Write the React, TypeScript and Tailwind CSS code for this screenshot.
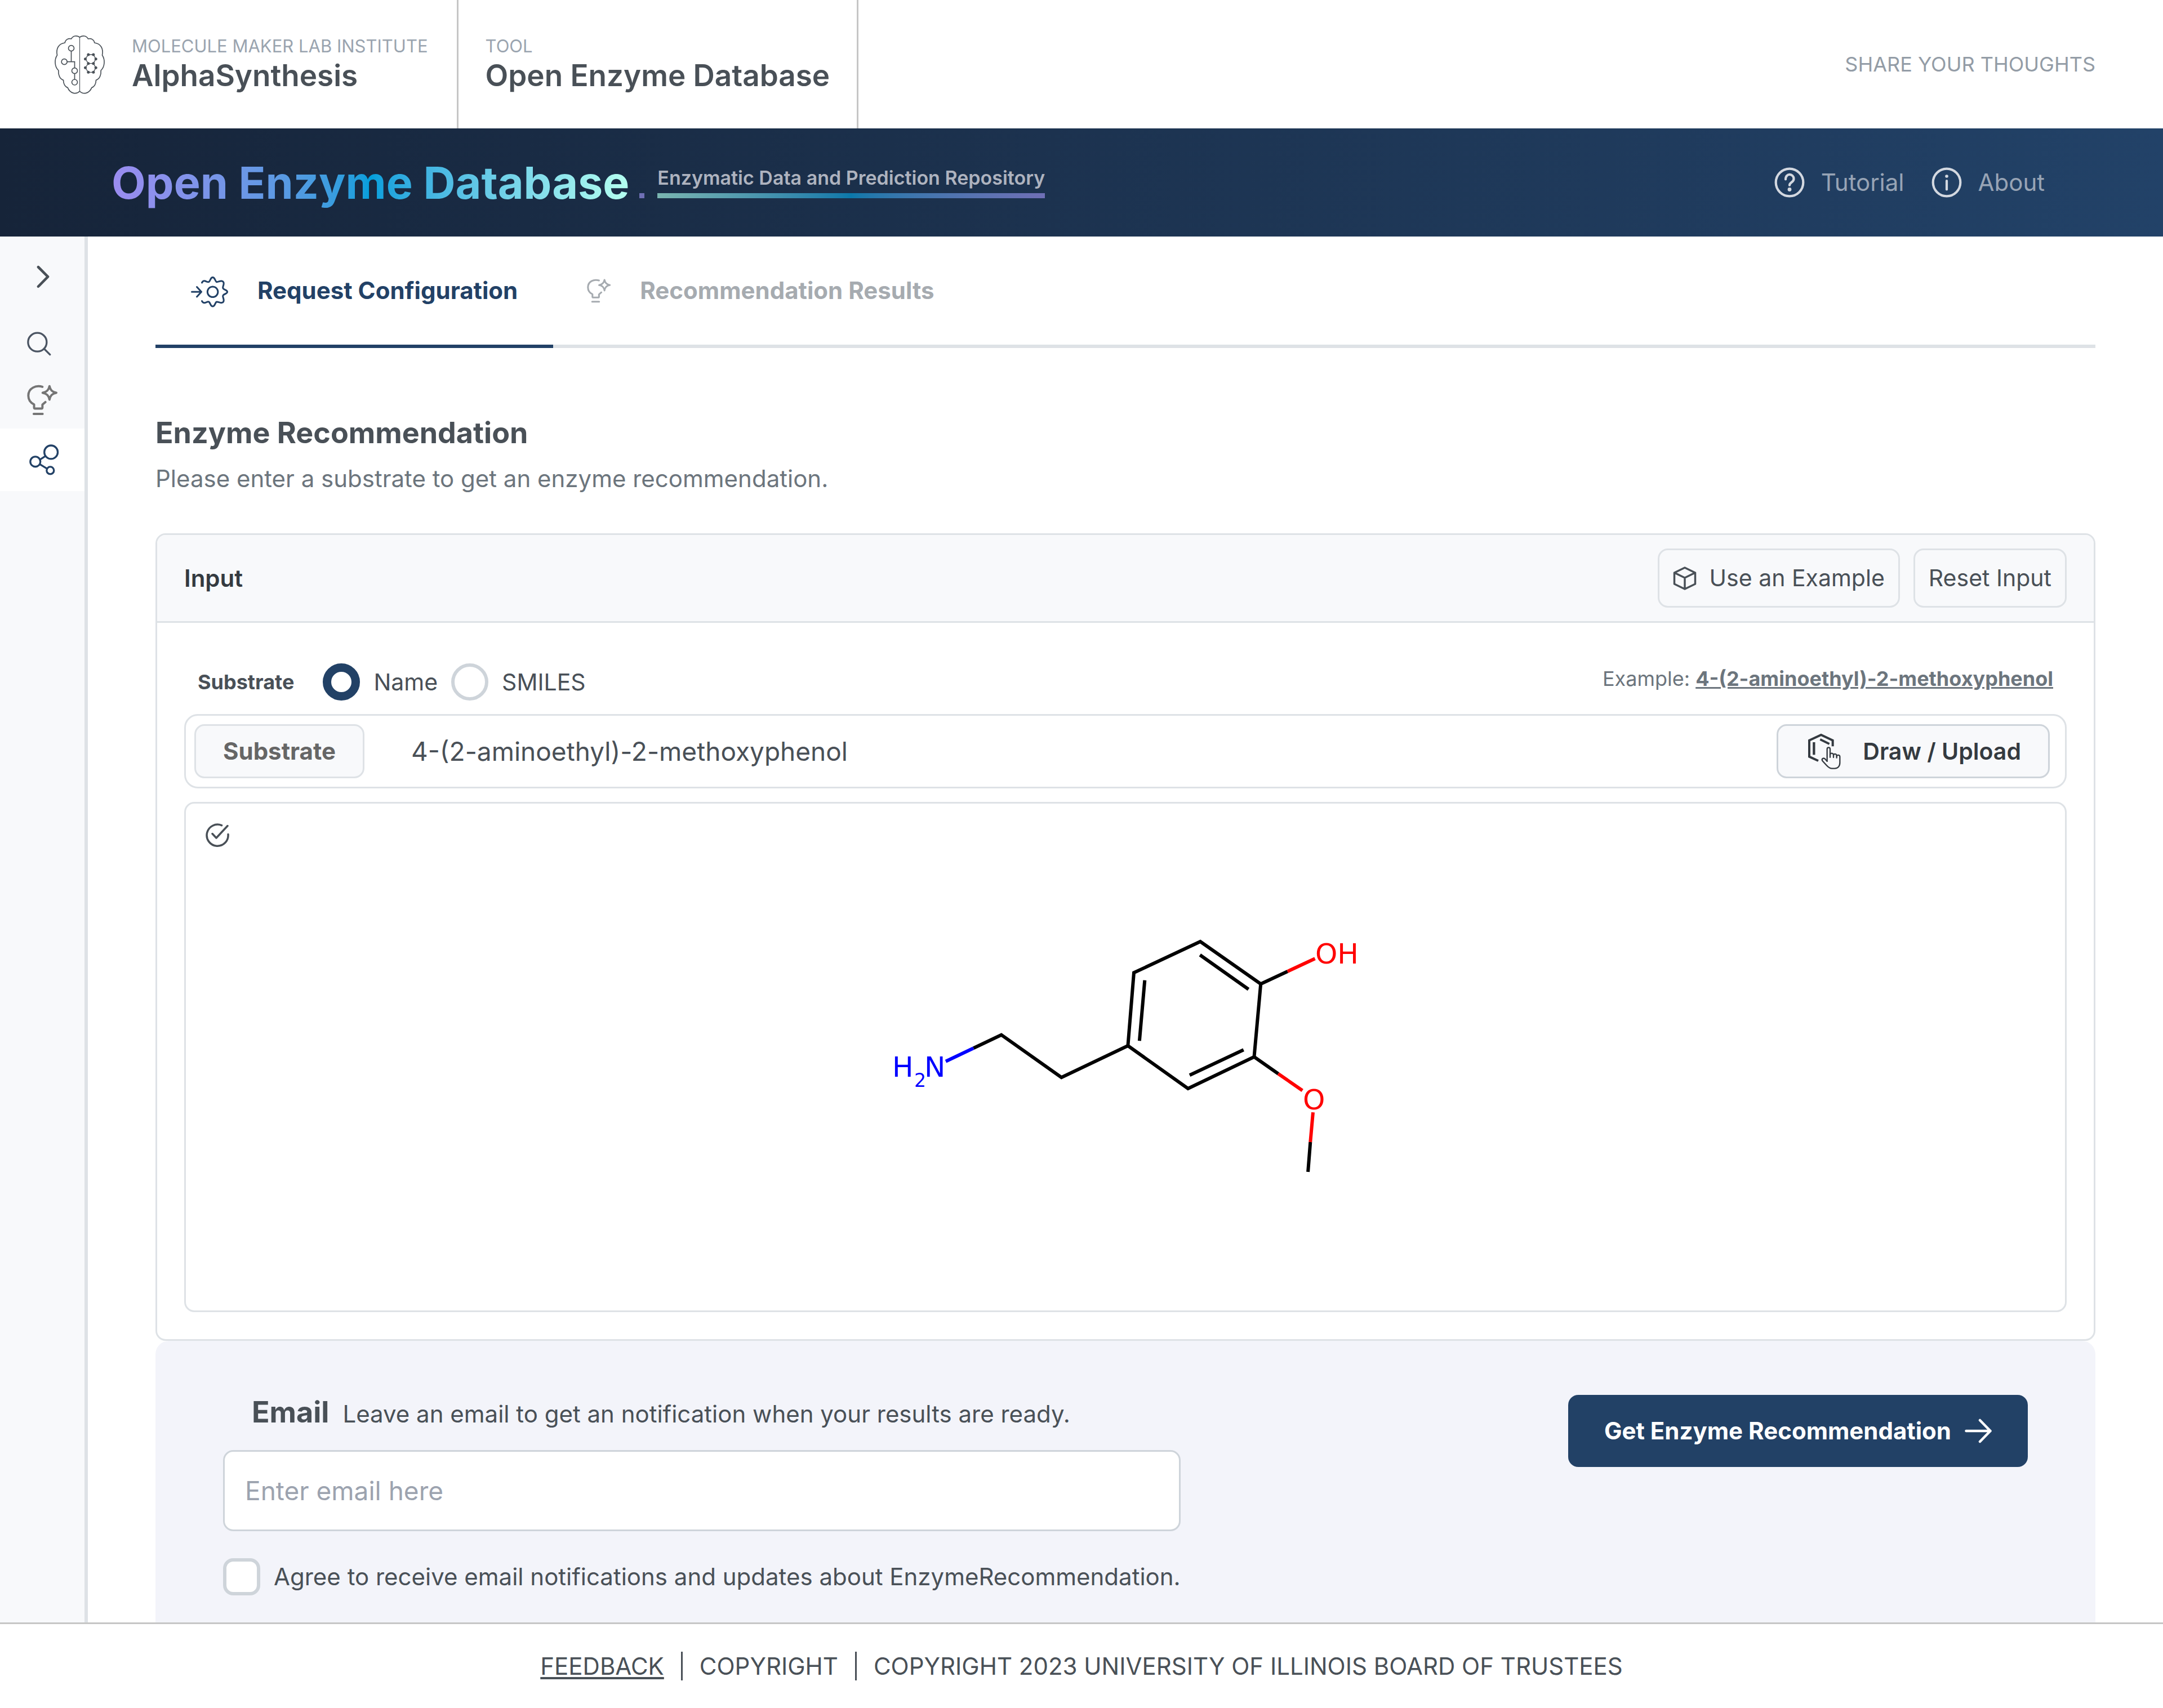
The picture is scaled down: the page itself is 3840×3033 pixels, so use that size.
import React, { useState } from "react";

const strokeProps = {
  fill: "none",
  stroke: "currentColor",
  strokeLinecap: "round" as const,
  strokeLinejoin: "round" as const,
};

function BrainLogo() {
  const half =
    "M244 77C228 67 209 68 199 86C183 82 168 90 165 107C130 112 117 140 124 173C108 196 110 235 131 254C129 278 138 300 157 306C157 325 166 342 180 346C192 376 224 385 244 365";
  const rightHalf =
    "M244 77C260 67 279 68 289 86C305 82 320 90 323 107C358 112 371 140 364 173C380 196 378 235 357 254C359 278 350 300 331 306C331 325 322 342 308 346C296 376 264 385 244 365";
  const dots = [
    [290, 170], [317, 170], [274, 193], [330, 193], [290, 217],
    [317, 217], [274, 240], [330, 240], [290, 264], [317, 264],
  ];
  return (
    <svg viewBox="105 62 278 321" className="h-[107px] w-[93px] text-[#495057]" aria-hidden="true">
      <g {...strokeProps} strokeWidth="5">
        <path d={half} />
        <path d={rightHalf} />
        <path d="M244 77V365" strokeWidth="3.5" />
        <circle cx="199" cy="136" r="15" />
        <circle cx="162" cy="208" r="15" />
        <circle cx="217" cy="256" r="15" />
        <circle cx="217" cy="317" r="15" />
        <path d="M199 152V208M178 208H217V240M217 272V301" strokeLinejoin="miter" />
        <path d="M290 170H317L330 193L317 217H290L274 193ZM290 217L274 240L290 264H317L330 240L317 217" strokeWidth="4" />
      </g>
      {dots.map(([x, y]) => (
        <circle key={`${x}-${y}`} cx={x} cy={y} r="7.5" fill="currentColor" />
      ))}
    </svg>
  );
}

function QuestionIcon() {
  return (
    <svg viewBox="0 0 54 54" className="size-[54px] text-[#d3d8e0]" aria-hidden="true">
      <g {...strokeProps}>
        <circle cx="27" cy="27" r="24.3" strokeWidth="4.2" />
        <path d="M20 21.5C20 9.5 34.5 11 34.5 20.5C34.5 27 27 26.5 27 32" strokeWidth="4.2" />
      </g>
      <circle cx="27" cy="39.5" r="3.4" fill="currentColor" />
    </svg>
  );
}

function InfoIcon() {
  return (
    <svg viewBox="0 0 54 54" className="size-[54px] text-[#d3d8e0]" aria-hidden="true">
      <g {...strokeProps}>
        <circle cx="27" cy="27" r="24.3" strokeWidth="4.2" />
        <path d="M27 24V39.5" strokeWidth="4.2" />
      </g>
      <circle cx="27" cy="16" r="2.8" fill="currentColor" />
    </svg>
  );
}

function ChevronIcon() {
  return (
    <svg viewBox="195 212 70 123" className="h-[41px] w-[23px] text-[#495057]" aria-hidden="true">
      <path d="M204 221L256 273L204 326" {...strokeProps} strokeWidth="14" />
    </svg>
  );
}

function SearchIcon() {
  return (
    <svg viewBox="143 570 129 129" className="size-[43px] text-[#4b5563]" aria-hidden="true">
      <g {...strokeProps} strokeWidth="10">
        <circle cx="198" cy="626" r="49.5" />
        <path d="M234 661L265 692" />
      </g>
    </svg>
  );
}

function BulbIcon({ className }: { className: string }) {
  return (
    <svg viewBox="143 845 165 167" className={className} aria-hidden="true">
      <g {...strokeProps} strokeWidth="12">
        <path d="M225 857C190 846 149 864 149 904C149 926 162 943 180 952V969Q180 974 185 974H220Q225 974 225 969V953L241 939" />
        <path d="M178 1003H226" />
        <path d="M263 853C267 875 277 885 300 889C277 893 267 903 263 926C259 903 249 893 226 889C249 885 259 875 263 853Z" />
      </g>
    </svg>
  );
}

function NodesIcon() {
  return (
    <svg viewBox="156 1169 159 166" className="h-[55px] w-[53px] text-[#224166]" aria-hidden="true">
      <g {...strokeProps} strokeWidth="10">
        <circle cx="272" cy="1211" r="36" />
        <circle cx="188" cy="1262" r="27" />
        <circle cx="268" cy="1309" r="19.5" />
        <path d="M213 1251L241 1233M212 1276L250 1299" />
      </g>
    </svg>
  );
}

function ConfigIcon() {
  return (
    <svg viewBox="0 -5 66 61" className="h-[61px] w-[66px]" aria-hidden="true">
      <g {...strokeProps} strokeWidth="3">
        <circle cx="38.6" cy="27.3" r="9.3" />
        <path d="M19.5 11C21 8 23 7.5 25 8C28 9 30.5 10.5 32 9.5C34.5 8 34.5 1.5 38.6 1.5C42.7 1.5 42.7 8 45.2 9.5C47.5 10.5 51 7.5 54.5 8C58 8.5 58.5 11 58 14C57.5 17 56 19 57 21C58.5 24 64.5 23.5 64.5 27.3C64.5 31.1 58.5 30.6 57 33.6C56 35.6 57.5 37.6 58 40.6C58.5 43.6 58 46.1 54.5 46.6C51 47.1 47.5 44.1 45.2 45.1C42.7 46.6 42.7 53.1 38.6 53.1C34.5 53.1 34.5 46.6 32 45.1C30.5 44.1 28 45.6 25 46.6C23 47.1 21 46.6 19.5 43.6" />
        <path d="M1.5 27.3H18.5M10.5 18.5L18.5 27.3L10.5 36" />
      </g>
    </svg>
  );
}

function BoxIcon() {
  return (
    <svg viewBox="0 0 42 42" className="size-[42px]" aria-hidden="true">
      <path d="M21 2L39.5 11V31L21 40L2.5 31V11ZM2.5 11L21 20L39.5 11M21 20V40" {...strokeProps} strokeWidth="3.5" />
    </svg>
  );
}

function DrawIcon() {
  return (
    <svg viewBox="200 65 186 195" className="h-[65px] w-[62px] text-[#343a40]" aria-hidden="true">
      <g fill="none" stroke="currentColor">
        <path d="M257 212L209 190V103L272 74L334 103V135" strokeWidth="12" />
        <path d="M234 113V180" strokeWidth="13" />
        <path d="M267 98L316 122" strokeWidth="11" />
        <g strokeWidth="7" strokeLinecap="round" strokeLinejoin="round">
          <path d="M304 214V150C304 138 320 138 320 150V193" />
          <path d="M320 180C321 168 337 170 338 181V194" />
          <path d="M338 183C340 172 354 174 355 185V196" />
          <path d="M355 188C358 178 372 180 372 191V222C372 242 360 253 344 253H331C318 253 310 246 301 236L279 212C273 202 285 194 293 202L304 214" />
        </g>
      </g>
    </svg>
  );
}

function CheckCircleIcon() {
  return (
    <svg viewBox="0 0 44 44" className="size-[44px] text-[#495057]" aria-hidden="true">
      <path d="M28.5 4.7A19 19 0 1 0 40 20.5M12 19.5L19 27L39 5.5" {...strokeProps} strokeWidth="3.5" />
    </svg>
  );
}

function ArrowIcon() {
  return (
    <svg viewBox="0 0 48 44" className="h-[44px] w-[48px]" aria-hidden="true">
      <path d="M2.5 22H45.5M27 3L45.5 22L27 41" {...strokeProps} strokeWidth="4.5" />
    </svg>
  );
}

function Molecule() {
  return (
    <svg viewBox="8 -193 900 900" className="size-[900px]" role="img" aria-label="4-(2-aminoethyl)-2-methoxyphenol">
      <g fill="none" strokeWidth="6">
        <g stroke="#000000">
          <path d="M188.3 241.2L237.7 217.7L344.4 293.3L462.4 237" />
          <path d="M462.4 237L473 107.3L590.9 52L698.2 127.3L686.5 256.7L569.1 313Z" />
          <path d="M492.3 120.7L482.9 228.3M590.3 75.7L676.5 136.7M667.7 244.3L572 289.3" />
          <path d="M698.2 127.3L745.8 105M686.5 256.7L729.3 286.7M786.3 408L782.1 461" />
        </g>
        <path d="M139 264.7L188.3 241.2" stroke="#0000ff" />
        <path d="M745.8 105L794.5 82.3M729.3 286.7L772.2 316.5M791 355.3L786.3 408" stroke="#ff0000" />
      </g>
      <g className="font-['DejaVu_Sans',sans-serif]" fontSize="50">
        <g fill="#0000ff">
          <text x="44" y="292">H</text>
          <text x="83" y="310" fontSize="33">2</text>
          <text x="101" y="292">N</text>
        </g>
        <g fill="#ff0000">
          <text x="795" y="91">OH</text>
          <text x="773" y="350">O</text>
        </g>
      </g>
    </svg>
  );
}

function TopBar() {
  return (
    <header className="flex h-[228px] items-stretch bg-white">
      <a href="#home" className="flex items-center gap-[46px] border-r-3 border-[#c6c6c6] pr-[51px] pl-[95px]">
        <BrainLogo />
        <span className="flex flex-col pb-1">
          <span className="text-[31px] leading-[44px] text-[#9aa4af]">MOLECULE MAKER LAB INSTITUTE</span>
          <span className="text-[53px] leading-[60px] font-semibold text-[#495057]">AlphaSynthesis</span>
        </span>
      </a>
      <div className="flex flex-col justify-center border-r-3 border-[#c6c6c6] px-12 pb-1">
        <span className="text-[31px] leading-[44px] text-[#9aa4af]">TOOL</span>
        <span className="text-[53px] leading-[60px] font-semibold text-[#495057]">Open Enzyme Database</span>
      </div>
      <a href="#thoughts" className="mr-30 ml-auto self-center text-[36px] leading-[48px] text-[#939ca6]">
        SHARE YOUR THOUGHTS
      </a>
    </header>
  );
}

function Banner() {
  return (
    <div className="flex h-48 items-center bg-linear-to-r from-[#162439] to-[#224268] pr-[210px] pl-[198px]">
      <h1 className="bg-linear-to-r from-[#9b8cf0] via-[#009fdc] to-[#b4fff0] bg-clip-text text-[79px] leading-[104px] font-bold text-transparent">
        Open Enzyme Database
      </h1>
      <div className="ml-[18px] flex items-end gap-[23px] pb-2">
        <span className="size-[9px] bg-[#6f6fb5]" />
        <div>
          <p className="text-[34px] leading-[54px] font-semibold text-[#aeb3bf]">Enzymatic Data and Prediction Repository</p>
          <div className="h-[9px] bg-linear-to-r from-[#7ab5b0] via-[#0a78aa] to-[#6f6fb5]" />
        </div>
      </div>
      <nav className="ml-auto flex items-center gap-12 text-[42px] leading-[54px] text-[#98a4b5]">
        <a href="#tutorial" className="flex items-center gap-[29px]">
          <QuestionIcon />
          Tutorial
        </a>
        <a href="#about" className="flex items-center gap-[29px]">
          <InfoIcon />
          About
        </a>
      </nav>
    </div>
  );
}

function Sidebar() {
  return (
    <aside className="flex w-[156px] shrink-0 flex-col border-r-6 border-[#dee2e6] bg-[#f8f9fb]">
      <button type="button" aria-label="Expand menu" className="flex h-[142px] items-center pl-[65px]">
        <ChevronIcon />
      </button>
      <a href="#search" aria-label="Search" className="flex h-[97px] items-center pl-12">
        <SearchIcon />
      </a>
      <a href="#prediction" aria-label="Prediction" className="flex h-[102px] items-center pl-12">
        <BulbIcon className="size-[55px] text-[#757575]" />
      </a>
      <a href="#recommendation" aria-label="Recommendation" className="flex h-[111px] items-center bg-white pl-[52px]">
        <NodesIcon />
      </a>
    </aside>
  );
}

function Tabs() {
  return (
    <div role="tablist" className="flex border-b-6 border-[#dee2e6] text-[42px] leading-[54px] font-bold">
      <button
        type="button"
        role="tab"
        aria-selected="true"
        className="-mb-[6px] flex h-[198px] items-center gap-[52px] border-b-6 border-[#224166] px-[63px] text-[#224166]"
      >
        <ConfigIcon />
        Request Configuration
      </button>
      <button type="button" role="tab" aria-selected="false" className="flex h-48 items-center gap-[51px] px-[60px] text-[#a6abb0]">
        <BulbIcon className="size-[43px]" />
        Recommendation Results
      </button>
    </div>
  );
}

function InputCard() {
  const [mode, setMode] = useState("name");
  const [value, setValue] = useState("4-(2-aminoethyl)-2-methoxyphenol");
  const radio =
    "size-[66px] shrink-0 appearance-none rounded-full border-6 border-[#ced4da] bg-white checked:border-[15px] checked:border-[#224166]";
  return (
    <section className="mt-[67px] overflow-hidden rounded-[18px] border-3 border-[#dee2e6] bg-white">
      <div className="flex items-center gap-6 border-b-3 border-[#dee2e6] bg-[#f8f9fb] px-12 py-6 leading-[51px] text-[#495057]">
        <h3 className="mr-auto text-[42px] font-semibold text-[#343a40]">Input</h3>
        <button type="button" className="flex h-[105px] items-center gap-[23px] rounded-[18px] border-3 border-[#dee2e6] px-6 text-[41px]">
          <BoxIcon />
          Use an Example
        </button>
        <button type="button" className="h-[105px] rounded-[18px] border-3 border-[#dee2e6] px-6 text-[41px]">
          Reset Input
        </button>
      </div>
      <div className="flex flex-col gap-6 px-12 pt-[72px] pb-12">
        <div role="radiogroup" aria-labelledby="format-label" className="flex items-center px-6 text-[#495057]">
          <span id="format-label" className="mr-[51px] text-[36px] leading-[54px] font-bold">Substrate</span>
          <input id="by-name" type="radio" name="format" className={radio} checked={mode === "name"} onChange={() => setMode("name")} />
          <label htmlFor="by-name" className="mx-6 text-[41px] leading-[54px]">Name</label>
          <input id="by-smiles" type="radio" name="format" className={radio} checked={mode === "smiles"} onChange={() => setMode("smiles")} />
          <label htmlFor="by-smiles" className="ml-6 text-[41px] leading-[54px]">SMILES</label>
          <p className="ml-auto self-start text-[36px] leading-[54px] text-[#6c757d]">
            Example:{" "}
            <a href="#example" className="font-bold underline">
              4-(2-aminoethyl)-2-methoxyphenol
            </a>
          </p>
        </div>
        <div className="flex h-[132px] items-center rounded-[24px] border-3 border-[#dee2e6] pr-[27px] pl-[15px]">
          <label
            htmlFor="substrate"
            className="flex h-24 items-center rounded-[18px] border-3 border-[#dee2e6] bg-[#f8f9fb] px-12 text-[42px] leading-[54px] font-bold text-[#666666]"
          >
            Substrate
          </label>
          <input
            id="substrate"
            type="text"
            value={value}
            onChange={(e) => setValue(e.target.value)}
            className="h-24 min-w-0 flex-1 bg-transparent pr-6 pl-[83px] text-[46px] text-[#495057] outline-none"
          />
          <button
            type="button"
            className="flex h-24 items-center gap-[36px] rounded-[18px] border-3 border-[#ced4da] bg-[#f8f9fb] pr-12 pl-[52px] text-[41px] leading-[54px] font-semibold text-[#343a40]"
          >
            <DrawIcon />
            Draw / Upload
          </button>
        </div>
        <div className="relative flex justify-center rounded-[18px] border-3 border-[#dee2e6]">
          <span className="absolute top-[34px] left-[35px]">
            <CheckCircleIcon />
          </span>
          <Molecule />
        </div>
      </div>
    </section>
  );
}

function SubmitPanel() {
  const [agreed, setAgreed] = useState(false);
  return (
    <section className="flex flex-1 items-start justify-between rounded-t-[24px] bg-[#f3f4fa] px-30 pt-24 pb-[47px]">
      <div className="flex flex-col text-[#495057]">
        <div className="flex items-baseline gap-6 pl-[51px]">
          <label htmlFor="email" className="text-[52px] leading-[62px] font-bold">Email</label>
          <span className="text-[42px] leading-[54px]">Leave an email to get an notification when your results are ready.</span>
        </div>
        <input
          id="email"
          type="email"
          placeholder="Enter email here"
          className="mt-[36px] h-36 rounded-[18px] border-3 border-[#ced4da] bg-white px-9 text-[46px] placeholder:text-[#9ca3af]"
        />
        <div className="mt-12 flex items-center gap-6">
          <input
            id="agree"
            type="checkbox"
            checked={agreed}
            onChange={() => setAgreed(!agreed)}
            className="size-[66px] shrink-0 appearance-none rounded-[18px] border-6 border-[#ced4da] bg-white checked:bg-[#224166]"
          />
          <label htmlFor="agree" className="text-[42px] leading-[54px]">
            Agree to receive email notifications and updates about EnzymeRecommendation.
          </label>
        </div>
      </div>
      <button
        type="submit"
        className="flex h-32 items-center gap-6 rounded-[18px] bg-[#224166] px-16 text-[42px] leading-[54px] font-bold text-white"
      >
        Get Enzyme Recommendation
        <ArrowIcon />
      </button>
    </section>
  );
}

function Footer() {
  return (
    <footer className="flex items-center justify-center gap-[30px] border-t-3 border-[#c6c6c6] bg-white py-[49px] text-[42px] leading-[51px] text-[#495057]">
      <a href="#feedback" className="underline decoration-4 underline-offset-4">FEEDBACK</a>
      <span className="h-[51px] w-[3px] bg-[#495057]" />
      <span>COPYRIGHT</span>
      <span className="h-[51px] w-[3px] bg-[#495057]" />
      <span>COPYRIGHT 2023 UNIVERSITY OF ILLINOIS BOARD OF TRUSTEES</span>
    </footer>
  );
}

export default function App() {
  return (
    <div className="flex min-h-screen flex-col bg-white font-['Inter',sans-serif]">
      <TopBar />
      <Banner />
      <div className="flex flex-1">
        <Sidebar />
        <main className="flex min-w-0 flex-1 flex-col px-30">
          <Tabs />
          <h2 className="mt-[118px] text-[52px] leading-[66px] font-bold text-[#495057]">Enzyme Recommendation</h2>
          <p className="mt-[18px] text-[42px] leading-[60px] text-[#6c757d]">
            Please enter a substrate to get an enzyme recommendation.
          </p>
          <InputCard />
          <SubmitPanel />
        </main>
      </div>
      <Footer />
    </div>
  );
}
